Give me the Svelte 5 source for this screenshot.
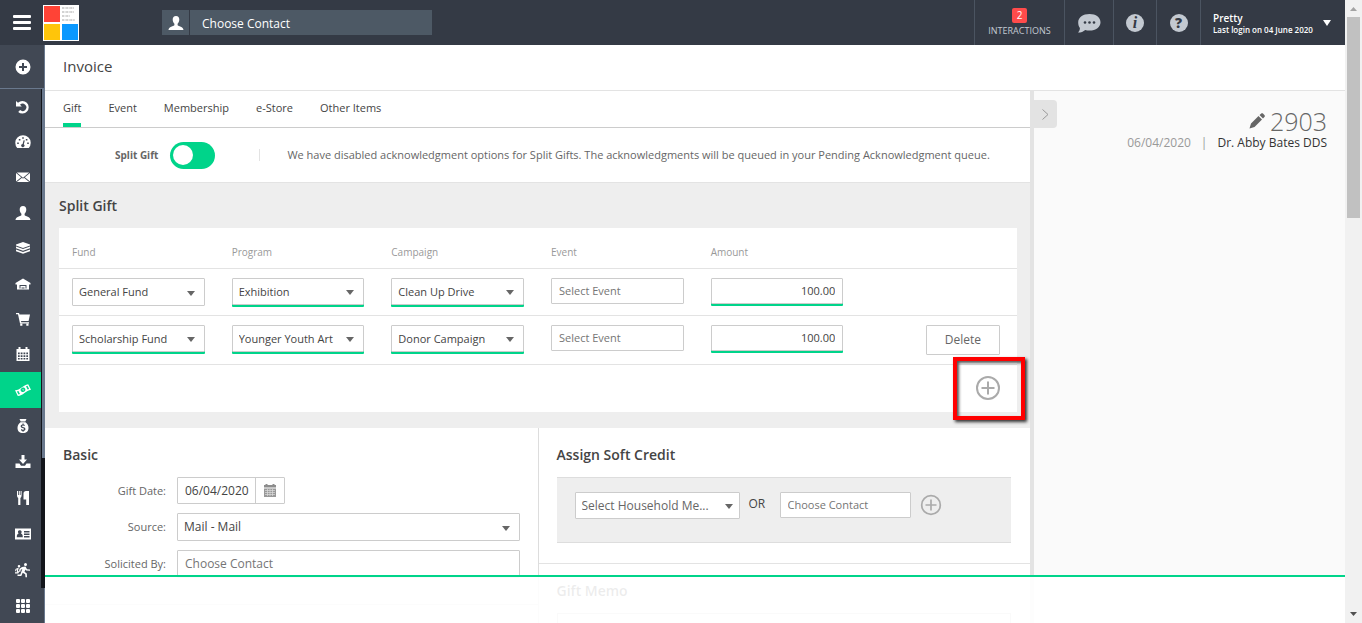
<script lang="ts">
	type NavItem = { label: string; icon: string; active?: boolean };
	type SplitRow = {
		fund: string;
		program: string;
		campaign: string;
		amount: string;
		fundChanged: boolean;
		removable: boolean;
	};

	let splitGift = $state(true);
	let activeTab = $state('Gift');

	const tabs = ['Gift', 'Event', 'Membership', 'e-Store', 'Other Items'];
	const columns = ['Fund', 'Program', 'Campaign', 'Event', 'Amount'];

	let rows: SplitRow[] = $state([
		{
			fund: 'General Fund',
			program: 'Exhibition',
			campaign: 'Clean Up Drive',
			amount: '100.00',
			fundChanged: false,
			removable: false
		},
		{
			fund: 'Scholarship Fund',
			program: 'Younger Youth Art',
			campaign: 'Donor Campaign',
			amount: '100.00',
			fundChanged: true,
			removable: true
		}
	]);

	const personIcon =
		'M8 1c2.2 0 3.4 1.6 3.3 3.8-.1 1.7-.8 3.1-1.7 3.9v1.5c.6 1 5.9 1.3 5.9 4.8H.5c0-3.5 5.3-3.8 5.9-4.8V8.7C5.5 7.9 4.8 6.5 4.7 4.8 4.6 2.6 5.8 1 8 1z';

	const navItems: NavItem[] = [
		{
			label: 'Recent',
			icon: 'M1 2l2 1.8A6.300 6.300 0 1 1 3.200 13l1.900-1.900A3.700 3.700 0 1 0 5 5.700L6.800 7.500H1z'
		},
		{
			label: 'Dashboard',
			icon: 'M2.200 14A7.700 7.700 0 1 1 13.800 14zM8.600 6.200L7.600 10a1.600 1.600 0 1 0 1.200.3l1-3.800zM2.200 8.500v1.600h1.600V8.500zM3.800 5v1.600h1.600V5zM7.200 3.200v1.600h1.600V3.200zM10.800 5v1.600h1.600V5zM12.200 8.500v1.600h1.600V8.500z'
		},
		{
			label: 'Mail',
			icon: 'M1 4l5.200 4.300L1 12.500zM15 4L9.800 8.300l5.200 4.200zM1.800 3.500h12.400L8 8.700zM1.800 13l5.200-4.200 1 .9 1-.9 5.200 4.200z'
		},
		{ label: 'Contacts', icon: personIcon },
		{
			label: 'Funds',
			icon: 'M8 2l7 2.500v1L8 8 1 5.500v-1zM1 6.600L8 9l7-2.400v1.700L8 10.800 1 8.300zM1 9.500L8 12l7-2.500v1.700L8 13.700l-7-2.500z'
		},
		{
			label: 'Organizations',
			icon: 'M8 2.500L15.500 7v1.500H14V13.500H2v-5H.5V7zM4.500 8v4.500h7V8zM4.500 8h7v1h-7zM5.500 10h5v2.500h-1v-1h-3v1h-1z'
		},
		{
			label: 'Store',
			icon: 'M1 2h3l.5 1.500H15L13.600 10H6l.3 1.200H14v1.200H5L3 3.300H1zM5.200 12.700h2.200v2H5.200zM11.300 12.700h2.200v2h-2.200z'
		},
		{
			label: 'Calendar',
			icon: 'M1.500 3h2V1h2v2h5V1h2v2h2v12h-13zM3 6.500v1.700h1.700V6.500zm2.700 0v1.700h1.800V6.500zm2.800 0v1.700h1.800V6.500zm2.800 0v1.700H13V6.500zM3 9.200v1.700h1.700V9.200zm2.700 0v1.700h1.800V9.200zm2.800 0v1.700h1.800V9.200zm2.800 0v1.700H13V9.200zM3 11.900v1.700h1.700v-1.700zm2.700 0v1.700h1.800v-1.700zm2.800 0v1.700h1.800v-1.700zm2.800 0v1.700H13v-1.700z'
		},
		{
			label: 'Gifts',
			active: true,
			icon: 'M0 8.200c5 .2 8-5.400 13.200-6l2.800 5.600c-5 .6-8 6.200-13.200 6.200zM1.900 9.500l1.600 3 1.500-.4-1.600-3.100zM11 4.200l1.600 3.200 1.500-.5-1.600-3.200zM7 5.900c-1.300.6-1.800 1.700-1.200 2.900s1.800 1.600 3.100 1 1.900-1.800 1.300-3S8.300 5.300 7 5.900zM7.500 7l1 .4.3 1.100-1-.3z'
		},
		{
			label: 'Pledges',
			icon: 'M4.500 1h7L10.300 3.500H5.700zM5.500 4.300h5c2 1.500 3 3.500 3 5.700 0 3-2 5-5.500 5s-5.500-2-5.500-5c0-2.200 1-4.200 3-5.700zM7.500 5.500v.9C5.200 6.700 5 9.300 7.400 10l1.300.5c.7.400.4 1.200-.6 1.200-.9 0-1.500-.3-2.100-.7v1.300c.4.300.9.500 1.500.6v.9h1.100v-.9c2.400-.3 2.500-3 .1-3.700l-1.300-.4c-.8-.4-.4-1.200.5-1.200.7 0 1.300.2 1.800.5V6.800c-.4-.2-.7-.3-1.100-.4v-.9z'
		},
		{
			label: 'Import',
			icon: 'M6.500 1h3v4.500H12L8 10 4 5.500h2.500zM.5 9.500h4L6 11.700h4l1.500-2.200h4V14h-15z'
		},
		{
			label: 'Dining',
			icon: 'M2 1h1v4h.8V1h1v4h.8V1h1v4c0 1.700-.5 2.500-1.200 3v7H3.200V8C2.500 7.500 2 6.700 2 5zM8.500 3.500C8.500 2 9.500 1 11 1h3v14h-2.800V9.500H8.500z'
		},
		{
			label: 'Membership cards',
			icon: 'M0 2.500h16v11H0zM4.800 4.200a1.800 1.800 0 0 0-1.200 3.200C2.300 7.900 1.800 9 1.800 11.200h6C7.800 9 7.300 7.900 6 7.400a1.800 1.800 0 0 0-1.200-3.200zM9 5v1.400h5.500V5zM9 7.500v1.400h5.500V7.500zM9 10v1.400h5.500V10z'
		},
		{
			label: 'Volunteers',
			icon: 'M10.500 1a1.500 1.500 0 1 1 0 3 1.500 1.500 0 0 1 0-3zM7 5l3.500-.6L12 7.200l3 .3v1.300l-3.800-.2-.7-1-1 2.200 2.300 1.800.2 3.700h-1.500l-.3-3-2.500-1.500L6.300 14H2.500v-1.500h2.800L7.300 7l-1.500.7-.5 2H4l.5-3zM4 3a1.300 1.300 0 1 1 0 2.600A1.300 1.300 0 0 1 4 3zM2 6.200l1.800-.4-.8 3 1.200 1-1 1.700H0V10.300h2.400L1.500 9l.7-1.500-1 .3-.4 1.400H0l.5-2.300z'
		}
	];

	function addRow() {
		rows.push({
			fund: 'General Fund',
			program: 'Exhibition',
			campaign: 'Clean Up Drive',
			amount: '0.00',
			fundChanged: false,
			removable: true
		});
	}

	function removeRow(index: number) {
		rows.splice(index, 1);
	}
</script>

{#snippet glyph(d: string)}
	<svg class="glyph" viewBox="0 0 16 16" aria-hidden="true"><path fill-rule="evenodd" {d} /></svg>
{/snippet}

{#snippet plusCircle()}
	<svg class="plus" viewBox="0 0 26 26" aria-hidden="true">
		<circle cx="13" cy="13" r="11" />
		<path d="M13 6.5v13M6.5 13h13" />
	</svg>
{/snippet}

{#snippet dropdown(value: string, label: string, changed: boolean)}
	<span class="select" class:changed>
		<select aria-label={label}>
			<option>{value}</option>
		</select>
	</span>
{/snippet}

<div class="window">
	<div class="page">
		<header class="topbar">
			<button class="menu" type="button" aria-label="Menu"><span></span><span></span><span></span></button>
			<svg class="logo" viewBox="0 0 36 36" role="img" aria-label="Logo">
				<rect width="36" height="36" fill="#fff" />
				<rect x="1" y="1" width="16" height="16" fill="#ff4336" />
				<rect x="1" y="19" width="16" height="16" fill="#ffc50a" />
				<rect x="19" y="19" width="16" height="16" fill="#0a98ff" />
				<g fill="none" stroke="#c4c4c4" stroke-width="1.5" stroke-dasharray="2 .6 1 .5">
					<path d="M19 3h12M19 7h12M19 11h8M19 15h13" />
				</g>
			</svg>
			<div class="search">
				<span class="search-icon">{@render glyph(personIcon)}</span>
				<input type="text" placeholder="Choose Contact" aria-label="Choose Contact" />
			</div>
			<button class="tool interactions" type="button">
				<span class="badge">2</span>
				<span>INTERACTIONS</span>
			</button>
			<button class="tool chat" type="button" aria-label="Chat">
				<svg viewBox="0 0 24 20" aria-hidden="true">
					<path fill="#c3c9d1" d="M12.500 1C19 1 23.500 4.500 23.500 9.200S19 17.500 12.500 17.500c-1.600 0-3-.2-4.300-.6C6.500 18.600 4 19.400 1 19.500c1.300-1.200 1.900-2.600 1.900-4.500C1.700 13.500 1.200 11.500 1.200 9.200 1.200 4.500 6 1 12.500 1z" />
					<g fill="#343a45"><circle cx="8" cy="9.500" r="1.300" /><circle cx="12.500" cy="9.500" r="1.300" /><circle cx="17" cy="9.500" r="1.300" /></g>
				</svg>
			</button>
			<button class="tool info" type="button" aria-label="Information"><span class="round italic">i</span></button>
			<button class="tool help" type="button" aria-label="Help"><span class="round">?</span></button>
			<button class="tool user" type="button">
				<span class="user-text">
					<span class="user-name">Pretty</span>
					<span>Last login on 04 June 2020</span>
				</span>
				<svg class="caret" viewBox="0 0 8 6" aria-hidden="true"><path d="M0 0h8L4 6z" /></svg>
			</button>
		</header>

		<div class="body">
			<nav class="sidebar">
				<a class="nav-item first" href="#add" aria-label="Add">
					<svg class="glyph" viewBox="0 0 16 16" aria-hidden="true">
						<path fill-rule="evenodd" d="M8 .5a7.500 7.500 0 1 1 0 15 7.500 7.500 0 0 1 0-15zM7 4v3H4v2h3v3h2V9h3V7H9V4z" />
					</svg>
				</a>
				<div class="nav-scroll">
					<div class="nav-list">
						{#each navItems as item}
							<a class="nav-item" class:active={item.active} href="#{item.label}" aria-label={item.label}>
								{@render glyph(item.icon)}
							</a>
						{/each}
					</div>
					<div class="nav-track"><div class="nav-thumb"></div></div>
				</div>
				<a class="nav-item last" href="#apps" aria-label="All modules">
					<svg class="glyph" viewBox="0 0 16 16" aria-hidden="true">
						{#each [1, 6, 11] as y}
							{#each [1, 6, 11] as x}
								<rect {x} {y} width="4" height="4" rx="1" />
							{/each}
						{/each}
					</svg>
				</a>
			</nav>

			<main>
				<h1>Invoice</h1>
				<div class="content">
					<div class="form">
						<div class="tabs">
							{#each tabs as tab}
								<button class="tab" class:current={tab === activeTab} type="button" onclick={() => (activeTab = tab)}>
									{tab}
								</button>
							{/each}
						</div>

						<div class="toggle-row">
							<label for="split-gift">Split Gift</label>
							<input id="split-gift" class="toggle" type="checkbox" bind:checked={splitGift} />
							<p>
								We have disabled acknowledgment options for Split Gifts. The acknowledgments will be queued in your
								Pending Acknowledgment queue.
							</p>
						</div>

						<section class="split">
							<h2>Split Gift</h2>
							<div class="card">
								<table>
									<thead>
										<tr>
											{#each columns as column}
												<th scope="col">{column}</th>
											{/each}
											<td></td>
										</tr>
									</thead>
									<tbody>
										{#each rows as row, i}
											<tr>
												<td>{@render dropdown(row.fund, 'Fund', row.fundChanged)}</td>
												<td>{@render dropdown(row.program, 'Program', true)}</td>
												<td>{@render dropdown(row.campaign, 'Campaign', true)}</td>
												<td><input class="text" type="text" placeholder="Select Event" aria-label="Event" /></td>
												<td>
													<input class="text amount changed" type="text" bind:value={row.amount} aria-label="Amount" />
												</td>
												<td class="actions">
													{#if row.removable}
														<button class="delete" type="button" onclick={() => removeRow(i)}>Delete</button>
													{/if}
												</td>
											</tr>
										{/each}
									</tbody>
								</table>
								<div class="card-footer">
									<button class="add" type="button" aria-label="Add split" onclick={addRow}>
										{@render plusCircle()}
									</button>
								</div>
								<div class="highlight"></div>
							</div>
						</section>

						<div class="panels">
							<section class="basic">
								<h2>Basic</h2>
								<div class="field">
									<label for="gift-date">Gift Date:</label>
									<div class="date">
										<input id="gift-date" type="text" value="06/04/2020" />
										<button type="button" aria-label="Open calendar">
											<svg viewBox="0 0 12 13" aria-hidden="true">
												<path fill="#8d8d8d" d="M0 1h1.500V0h2v1h5V0h2v1H12v2.500H0z" />
												<path fill="#999" d="M0 4.500h12V13H0z" />
												<path stroke="#ddd" stroke-width=".7" d="M1 6.500h10M1 8.500h10M1 10.500h10M3.500 5v7M6 5v7M8.500 5v7" />
											</svg>
										</button>
									</div>
								</div>
								<div class="field">
									<label for="source">Source:</label>
									<span class="select">
										<select id="source"><option>Mail - Mail</option></select>
									</span>
								</div>
								<div class="field">
									<label for="solicited">Solicited By:</label>
									<input id="solicited" class="text" type="text" placeholder="Choose Contact" />
								</div>
							</section>

							<section class="side">
								<div class="soft">
									<h2>Assign Soft Credit</h2>
									<div class="soft-box">
										<span class="select household">
											<select aria-label="Household member"><option>Select Household Me...</option></select>
										</span>
										<span class="or">OR</span>
										<input class="text" type="text" placeholder="Choose Contact" aria-label="Soft credit contact" />
										<button class="add small" type="button" aria-label="Add soft credit">
											{@render plusCircle()}
										</button>
									</div>
								</div>
								<div class="memo">
									<h2><label for="memo">Gift Memo</label></h2>
									<textarea id="memo"></textarea>
								</div>
							</section>
						</div>
					</div>

					<aside>
						<button class="collapse" type="button" aria-label="Collapse panel">
							<svg viewBox="0 0 7 11" aria-hidden="true"><path d="M.5.5L6 5.500.5 10.500" /></svg>
						</button>
						<div class="summary">
							<div class="number">
								<svg viewBox="0 0 16 16" aria-hidden="true">
									<path d="M.5 15.500l1.500-5L9.500 3l3.500 3.500L5.500 14zM10.500 2L12 .7c.7-.6 1.500-.6 2.200 0l1.200 1.200c.6.7.6 1.500 0 2.200L14 5.500z" />
								</svg>
								<span>2903</span>
							</div>
							<div class="donor">
								<span class="muted">06/04/2020</span>
								<span class="muted">|</span>
								<span>Dr. Abby Bates DDS</span>
							</div>
						</div>
					</aside>
				</div>
				<div class="save-bar"></div>
			</main>
		</div>
	</div>

	<div class="scrollbar">
		<svg viewBox="0 0 7 4" aria-hidden="true"><path fill="#a3a3a3" d="M3.500 0L7 4H0z" /></svg>
		<div class="scroll-thumb"></div>
		<svg viewBox="0 0 7 4" aria-hidden="true"><path fill="#505050" d="M0 0h7L3.500 4z" /></svg>
	</div>
</div>

<style>
	:global(body) {
		font-family: 'Open Sans', 'Noto Sans', sans-serif;
		font-size: 11px;
		color: #444;
		background: #fff;
	}

	.window,
	.window * {
		box-sizing: border-box;
	}

	.window {
		display: flex;
		height: 100vh;
		overflow: hidden;
	}

	button,
	input,
	select,
	textarea {
		font: inherit;
		color: inherit;
		margin: 0;
		padding: 0;
		border: 0;
		background: none;
		border-radius: 0;
		min-width: 0;
	}

	button {
		cursor: pointer;
	}

	input::placeholder {
		color: #757575;
		opacity: 1;
	}

	h1,
	h2,
	p {
		margin: 0;
	}

	h2 {
		font-size: 14px;
		line-height: 20px;
		font-weight: 600;
		color: #444;
	}

	.page {
		flex: 1;
		min-width: 0;
		display: flex;
		flex-direction: column;
	}

	/* Top bar */
	.topbar {
		flex: none;
		display: flex;
		align-items: center;
		height: 45px;
		background: #343a45;
		color: #fff;
	}

	.menu {
		display: flex;
		flex-direction: column;
		gap: 3px;
		width: 18px;
		margin: 0 12px 0 13px;
	}

	.menu span {
		height: 3px;
		border-radius: 1px;
		background: #fff;
	}

	.logo {
		width: 36px;
		height: 36px;
		margin-right: 83px;
	}

	.search {
		display: flex;
		gap: 1px;
		width: 270px;
		height: 25px;
		margin-right: auto;
		font-size: 12px;
	}

	.search-icon {
		display: flex;
		align-items: center;
		justify-content: center;
		width: 27px;
		background: #4d5965;
	}

	.search input {
		flex: 1;
		padding: 2px 12px 0;
		background: #4d5965;
	}

	.search input::placeholder {
		color: #fff;
	}

	.glyph {
		width: 16px;
		height: 16px;
		fill: #fff;
	}

	.tool {
		display: flex;
		align-items: center;
		justify-content: center;
		height: 100%;
		border-left: 1px solid #4b5461;
	}

	.interactions {
		flex-direction: column;
		gap: 1px;
		width: 90px;
		font-size: 9px;
		line-height: 13px;
		color: #c3c9d1;
	}

	.badge {
		width: 15px;
		height: 15px;
		border-radius: 2px;
		background: #ff4b4b;
		color: #fff;
		font-size: 10px;
		line-height: 15px;
	}

	.chat {
		width: 49px;
	}

	.chat svg {
		width: 24px;
		height: 20px;
	}

	.info {
		width: 43px;
	}

	.help {
		width: 44px;
	}

	.round {
		width: 18px;
		height: 18px;
		border-radius: 50%;
		background: #c3c9d1;
		color: #343a45;
		font-size: 14px;
		font-weight: 800;
		line-height: 18px;
	}

	.round.italic {
		font-family: 'Liberation Serif', serif;
		font-style: italic;
		font-size: 16px;
	}

	.user {
		justify-content: flex-start;
		gap: 10px;
		width: 145px;
		padding-left: 12px;
		text-align: left;
		font-size: 8px;
		font-weight: 600;
		line-height: 12px;
	}

	.user-text {
		display: flex;
		flex-direction: column;
		padding-top: 2px;
		white-space: nowrap;
	}

	.user-name {
		font-size: 10px;
	}

	.caret {
		width: 8px;
		height: 6px;
		fill: #fff;
	}

	/* Sidebar */
	.body {
		flex: 1;
		min-height: 0;
		display: flex;
	}

	.sidebar {
		flex: none;
		display: flex;
		flex-direction: column;
		width: 45px;
		background: #414854;
	}

	.nav-item {
		flex: 1;
		display: flex;
		align-items: center;
		justify-content: center;
		padding-left: 5px;
	}

	.nav-item.first,
	.nav-item.last {
		padding-left: 1px;
		border-right: 1px solid #69788d;
	}

	.nav-item.first {
		flex: 0 0 44px;
		border-bottom: 1px solid #69788d;
	}

	.nav-item.last {
		flex: 0 0 35px;
	}

	.nav-item.active {
		background: #00d48a;
	}

	.nav-list .nav-item:nth-child(n + 9) {
		flex: 0 0 36px;
	}

	.nav-scroll {
		flex: 1;
		min-height: 0;
		display: flex;
	}

	.nav-list {
		flex: 1;
		display: flex;
		flex-direction: column;
	}

	.nav-track {
		width: 4px;
		padding-left: 1px;
		background: #12151b;
	}

	.nav-thumb {
		height: 74%;
		background: #69788d;
	}

	/* Main area */
	main {
		position: relative;
		flex: 1;
		min-width: 0;
		display: flex;
		flex-direction: column;
	}

	h1 {
		flex: none;
		padding: 0 18px 2px;
		border-bottom: 1px solid #e3e3e3;
		font-size: 15px;
		font-weight: 400;
		line-height: 43px;
		color: #444;
	}

	.content {
		flex: 1;
		min-height: 0;
		display: flex;
		overflow: hidden;
	}

	.form {
		flex: 1;
		min-width: 0;
	}

	.tabs {
		display: flex;
		gap: 27px;
		height: 37px;
		padding: 0 18px;
		border-bottom: 1px solid #ccc;
	}

	.tab {
		border-bottom: 4px solid transparent;
	}

	.tab.current {
		border-bottom-color: #00d48a;
	}

	.toggle-row {
		display: flex;
		align-items: center;
		height: 55px;
		padding-left: 70px;
		border-bottom: 1px solid #e3e3e3;
	}

	.toggle-row label {
		font-size: 10px;
		font-weight: 700;
		color: #666;
	}

	.toggle {
		appearance: none;
		display: flex;
		align-items: center;
		width: 45px;
		height: 27px;
		margin: 0 44px 0 12px;
		padding: 0 3px;
		border-radius: 14px;
		background: #ccc;
		cursor: pointer;
	}

	.toggle:checked {
		background: #00d48a;
	}

	.toggle::before {
		content: '';
		width: 20px;
		height: 20px;
		border-radius: 50%;
		background: #fff;
	}

	.toggle-row p {
		padding-left: 27px;
		border-left: 1px solid #e3e3e3;
		line-height: 12px;
		color: #666;
		white-space: nowrap;
	}

	.split {
		padding: 13px 13px 16px 14px;
		background: #eee;
	}

	.card {
		position: relative;
		margin-top: 12px;
		background: #fff;
	}

	table {
		width: 100%;
		border-collapse: collapse;
		table-layout: fixed;
	}

	th,
	td {
		padding: 9px 14px 9px 13px;
		border-bottom: 1px solid #e3e3e3;
		text-align: left;
		vertical-align: top;
	}

	th {
		height: 40px;
		padding-top: 18px;
		padding-bottom: 8px;
		font-size: 10px;
		font-weight: 400;
		line-height: 13px;
		color: #999;
	}

	td.actions {
		padding-right: 17px;
		text-align: right;
	}

	.select {
		position: relative;
		display: block;
		width: 100%;
		height: 28px;
		border: 1px solid #ccc;
		border-radius: 1px;
		background: #fff;
	}

	.select select {
		appearance: none;
		display: block;
		width: 100%;
		height: 100%;
		padding: 0 24px 0 6px;
	}

	.select::after {
		content: '';
		position: absolute;
		top: 50%;
		right: 9px;
		margin-top: -1px;
		border: 4px solid transparent;
		border-top: 5px solid #666;
		border-bottom: 0;
		pointer-events: none;
	}

	.select.changed {
		height: 27px;
	}

	.changed {
		box-shadow: 0 2px 0 #00d48a;
	}

	.text {
		display: block;
		width: 100%;
		height: 26px;
		padding: 0 7px;
		border: 1px solid #ccc;
		border-radius: 1px;
		background: #fff;
	}

	.amount {
		text-align: right;
	}

	.delete {
		height: 30px;
		padding: 0 18px;
		border: 1px solid #ccc;
		border-radius: 1px;
		background: #fff;
		font-size: 12px;
		color: #666;
		vertical-align: top;
	}

	.card-footer {
		display: flex;
		align-items: center;
		justify-content: flex-end;
		height: 47px;
		padding-right: 16px;
	}

	.add {
		display: flex;
	}

	.plus {
		width: 26px;
		height: 26px;
		fill: none;
		stroke: #aaa;
		stroke-width: 2;
	}

	.small .plus {
		width: 22px;
		height: 22px;
	}

	/* Callout frame over the add button */
	.highlight {
		position: absolute;
		right: -8px;
		bottom: -8px;
		width: 72px;
		height: 63px;
		border: 4px solid #f00;
		box-shadow:
			2px 2px 3px #333,
			inset 2px 2px 3px #555;
		pointer-events: none;
	}

	.panels {
		display: grid;
		grid-template-columns: 1fr 1fr;
		align-items: start;
	}

	.basic {
		display: flex;
		flex-direction: column;
		gap: 9px;
		height: 177px;
		padding: 17px 18px 0;
		border-bottom: 1px solid #ddd;
	}

	.basic h2 {
		margin-bottom: 3px;
	}

	.field {
		display: flex;
		align-items: center;
		gap: 11px;
		font-size: 12px;
	}

	.field label {
		flex: 0 0 103px;
		font-size: 11px;
		text-align: right;
		color: #666;
	}

	.field .text,
	.field .select {
		flex: 1;
		height: 28px;
	}

	.date {
		display: flex;
		width: 108px;
		height: 27px;
		border: 1px solid #ccc;
		border-radius: 1px;
	}

	.date input {
		flex: 1;
		padding-left: 7px;
	}

	.date button {
		display: flex;
		align-items: center;
		justify-content: center;
		width: 29px;
		border-left: 1px solid #ccc;
	}

	.date svg {
		width: 12px;
		height: 13px;
	}

	.side {
		border-left: 1px solid #ddd;
	}

	.soft {
		padding: 17px 19px 20px 18px;
		border-bottom: 1px solid #e3e3e3;
	}

	.soft-box {
		display: flex;
		align-items: flex-start;
		margin-top: 12px;
		padding: 14px 18px 23px;
		border: solid #ddd;
		border-width: 1px 0;
		background: #eee;
	}

	.household {
		flex: 0 0 165px;
		height: 27px;
		font-size: 12px;
		color: #666;
	}

	.household::after {
		right: 6px;
	}

	.soft-box .text {
		flex: 0 0 131px;
	}

	.or {
		width: 40px;
		padding-left: 9px;
		font-size: 12px;
		line-height: 24px;
	}

	.small {
		margin: 2px 0 0 9px;
	}

	.memo {
		padding: 17px 19px 0 18px;
	}

	.memo textarea {
		display: block;
		width: 100%;
		height: 60px;
		margin-top: 12px;
		border: 1px solid #ccc;
		resize: none;
	}

	/* Summary panel */
	aside {
		flex: 0 0 315px;
		display: flex;
		align-items: flex-start;
		justify-content: space-between;
		padding: 9px 18px 0 0;
		border-left: 4px solid #e3e3e3;
		background: #fafafa;
	}

	.collapse {
		display: flex;
		align-items: center;
		justify-content: center;
		width: 23px;
		height: 28px;
		border-radius: 0 4px 4px 0;
		background: #e3e3e3;
	}

	.collapse svg {
		width: 7px;
		height: 11px;
		fill: none;
		stroke: #999;
	}

	.number {
		display: flex;
		align-items: center;
		justify-content: flex-end;
		gap: 5px;
		padding-top: 7px;
		font-size: 25px;
		font-weight: 300;
		line-height: 28px;
		color: #666;
	}

	.number svg {
		width: 16px;
		height: 16px;
		fill: #666;
	}

	.donor {
		display: flex;
		gap: 10px;
		font-size: 12px;
		line-height: 16px;
		color: #333;
	}

	.muted {
		color: #999;
	}

	/* Translucent bar pinned over the bottom of the form */
	.save-bar {
		position: absolute;
		right: 0;
		bottom: 0;
		left: 0;
		height: 48px;
		border-top: 2px solid #00d48a;
		background: rgba(255, 255, 255, 0.9);
	}

	/* Window scrollbar */
	.scrollbar {
		flex: 0 0 17px;
		display: flex;
		flex-direction: column;
		align-items: center;
		padding: 7px 0;
		background: #f1f1f1;
	}

	.scrollbar svg {
		flex: none;
		width: 7px;
		height: 4px;
	}

	.scroll-thumb {
		width: 13px;
		height: 33%;
		margin: 6px 0 auto;
		background: #c1c1c1;
	}
</style>
